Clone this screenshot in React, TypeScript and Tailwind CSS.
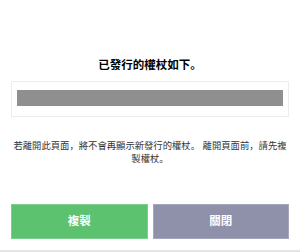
export default function App() {
  return (
    <div
      className="w-[300px] h-[252px] bg-white border-b-2 border-[#e4e4e4] flex flex-col px-[11px] text-[#222]"
      style={{ fontFamily: '"Liberation Sans", "Noto Sans CJK SC", sans-serif' }}
    >
      <h1 className="mt-[57px] text-center text-[11.5px] font-bold leading-[16px] text-black">
        已發行的權杖如下。
      </h1>
      <div className="mt-[8px] h-[36px] border border-[#ececec] px-[5px] pt-[8px]">
        <div className="h-[16px] w-full bg-[#8f8f8f]" />
      </div>
      <p className="mt-[23px] text-center text-[9.33px] leading-[12.5px] text-[#333]">
        若離開此頁面，將不會再顯示新發行的權杖。 離開頁面前，請先複製權杖。
      </p>
      <div className="flex-1" />
      <div className="flex gap-[5px] mb-[11px]">
        <button className="flex-1 h-[35px] bg-[#5cc270] border border-white/20 text-white text-[11.5px] font-bold">
          複製
        </button>
        <button className="flex-1 h-[35px] bg-[#8f90aa] border border-white/20 text-white text-[11.5px] font-bold">
          關閉
        </button>
      </div>
    </div>
  )
}
